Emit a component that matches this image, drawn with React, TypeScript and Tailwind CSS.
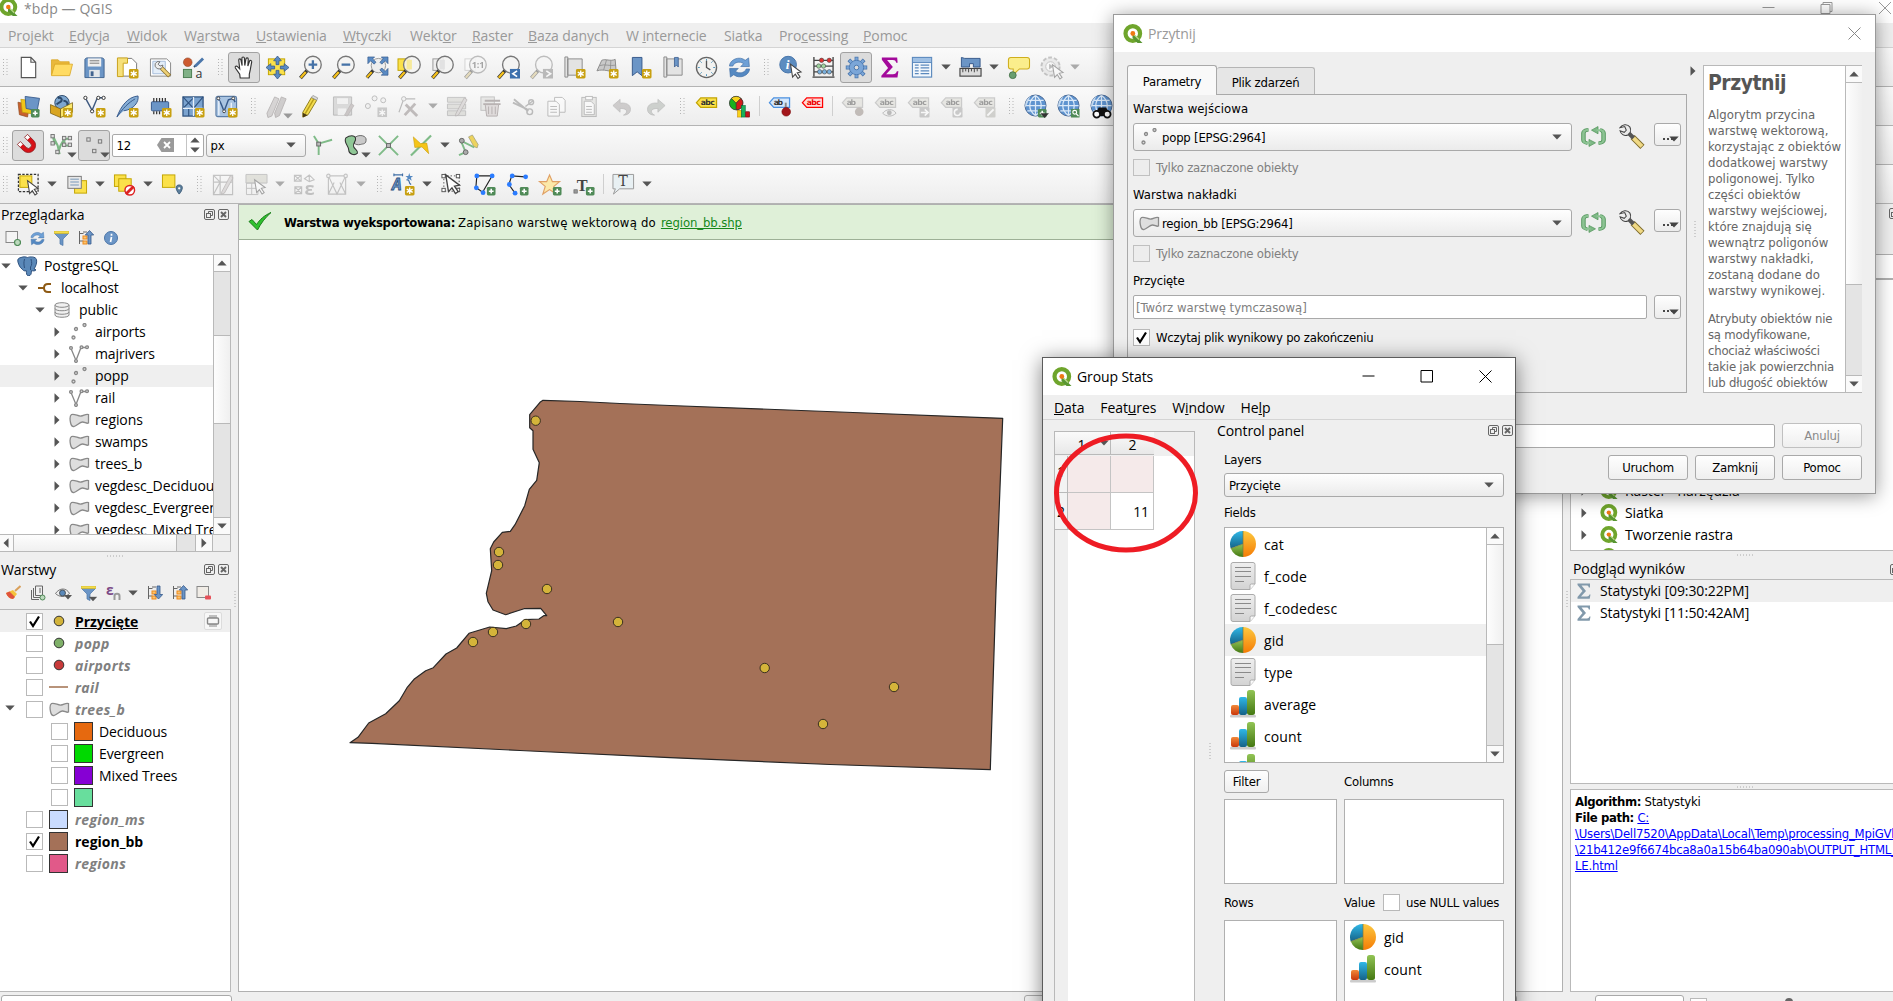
import type { ReactNode } from "react";

const SEG = "font-['Open_Sans','Noto_Sans',sans-serif] [font-stretch:normal] text-[14px] tracking-[-0.1px]";
const TAH = "font-['DejaVu_Sans_Condensed','DejaVu_Sans',sans-serif] [font-stretch:condensed] text-[13px] tracking-[-0.22px]";

/* ---------- icons ---------- */

const Star = () => (
  <g>
    <rect x="13.5" y="13.5" width="10" height="10" rx="1.5" fill="#c8a011" />
    <path d="M18.5 15v7M15.4 16.8l6.2 3.4M21.6 16.8l-6.2 3.4" stroke="#fff" strokeWidth="1.4" fill="none" />
  </g>
);
const Plus = () => (
  <g>
    <rect x="14.5" y="14.5" width="9" height="9" rx="1.5" fill="#4f8a57" />
    <path d="M19 16.5v5M16.5 19h5" stroke="#fff" strokeWidth="1.6" />
  </g>
);
const Lens = ({ children }: { children?: ReactNode }) => (
  <g>
    <path d="M9 14.5 1.500 23" stroke="#333" strokeWidth="3.800" />
    <path d="M7 16.800 1.800 22.600" stroke="#f6c21c" strokeWidth="2.400" />
    <circle cx="14.500" cy="9" r="8.700" fill="#f4f4f2" fillOpacity=".88" stroke="#777" strokeWidth="1.400" />
    {children}
  </g>
);
const Cursor = ({ x = 12, y = 9 }: { x?: number; y?: number }) => (
  <path
    transform={`translate(${x} ${y})`}
    d="M0 0 11 8.2 7 9 10 13.4 7.8 15 5 10.4 2.2 13.4Z"
    fill="#fff"
    stroke="#444"
    strokeWidth="1.1"
  />
);
const Tag = ({ fill, stroke, color = "#333", label = "abc" }: { fill: string; stroke: string; color?: string; label?: string }) => (
  <g>
    <path d="M1.500 8 6 3h16.500v10H6z" fill={fill} stroke={stroke} strokeWidth="1.3" />
    <text x="6" y="10.800" fontSize="8" fontWeight="bold" fontFamily="DejaVu Sans" fill={color} textLength={label === "abc" ? 14.5 : 9.5}>
      {label}
    </text>
  </g>
);
const Globe = () => (
  <g>
    <circle cx="12" cy="11" r="11" fill="#5e93cf" stroke="#4b6a94" strokeWidth="1" />
    <path d="M1.5 11h21M3.5 5.5h17M3.5 16.5h17M12 .5v21M12 .5C4 6 4 16 12 21.5M12 .5c8 5.500 8 15.500 0 21" stroke="#dbe9f8" strokeWidth="1.3" fill="none" />
    <path d="M7 .8C2 5 1 8 1.300 13c3-4 3-8 5.700-12.200z" fill="#c5daf0" />
  </g>
);
const Sheet = ({ c = "#555" }: { c?: string }) => <path d="M4.500 1.500h10l5 5v16h-15zM14.500 1.500v5h5" fill="#fff" stroke={c} strokeWidth="1.200" />;

const ICONS: Record<string, ReactNode> = {
  newfile: <Sheet />,
  open: (
    <g stroke="#d9a520" strokeWidth=".8">
      <path d="M1.500 19.500V4h7l2 2h9.500v13.500z" fill="#e9b83c" />
      <path d="M1.500 20.500 5 8.500h18.500l-3 12z" fill="#ffdb63" />
    </g>
  ),
  save: (
    <g>
      <path d="M2 3.500 3.500 2h17L22 3.500v19H2z" fill="#6b95c6" stroke="#42648f" strokeWidth="1" />
      <rect x="5" y="2.500" width="14" height="8.500" fill="#efefef" />
      <path d="M7 5h10M7 7.500h10" stroke="#777" strokeWidth="1" />
      <rect x="6.500" y="14.500" width="11" height="7.500" fill="#e4e7ea" />
      <rect x="8" y="16" width="3" height="5" fill="#42648f" />
    </g>
  ),
  newlayout: (
    <g>
      <path d="M2.500 2.500h14l5 5v13.500h-19z" fill="#fff" stroke="#777" />
      <path d="M1.500 21.500V2H12v5.500H7.500v14z" fill="#f6e07a" stroke="#c9a21a" />
      <Star />
    </g>
  ),
  layoutmgr: (
    <g>
      <path d="M1.500 3h17l4 4v14h-21z" fill="#fff" stroke="#888" />
      <path d="M4 5.500h13v13H4z" fill="#e4eef9" stroke="#a6bddb" />
      <path d="M13 12.500 21.500 21" stroke="#8a6f2a" strokeWidth="4.400" />
      <path d="M13 12.500 21 20.500" stroke="#edd077" strokeWidth="2.800" />
      <path d="M6.500 8a4 4 0 0 1 5-2l-2 2.500 2 2 3-1a4 4 0 0 1-6 3.500 4 4 0 0 1-2-5z" fill="#eee" stroke="#666" strokeWidth=".9" />
    </g>
  ),
  styles: (
    <g>
      <circle cx="6" cy="6.500" r="4.500" fill="#cd5b30" stroke="#8d4427" strokeWidth=".6" />
      <path d="M14 10.500 22 2.500" stroke="#4b77ab" strokeWidth="3" />
      <path d="M12.500 11.500 14 10" stroke="#2c4d78" strokeWidth="2" />
      <rect x="1.500" y="14" width="8.500" height="8.500" fill="#80b187" stroke="#4b7d52" />
      <text x="14" y="22.500" fontSize="13" fontFamily="Open Sans" fill="#333">a</text>
    </g>
  ),
  pan: (
    <path
      d="M7.500 23 7 19 2.500 12.500c-.8-1.600 1-2.600 2.200-1.400L7 13.500 6 4.500C5.900 2.700 8 2.500 8.300 4.200L9.500 10 9.300 2.300C9.300.6 11.700.6 11.900 2.200L12.300 10l1.200-7c.3-1.600 2.500-1.300 2.400.4L15.500 10.500l1.700-5c.6-1.500 2.500-.9 2.300.7L18 14.500 17 19v4z"
      fill="#fff"
      stroke="#333"
      strokeWidth="1.200"
    />
  ),
  panto: (
    <g>
      <rect x="2.500" y="3" width="17" height="16.500" fill="#fbe14a" stroke="#c2a400" />
      <path d="M12 0 16 5h-2.500v4h-3V5H8zM12 24l4-5h-2.500v-4h-3v4H8zM0 12l5-4v2.500h4v3H5V16zM24 12l-5-4v2.500h-4v3h4V16z" fill="#5a8bc4" stroke="#35588a" strokeWidth=".8" />
    </g>
  ),
  zoomin: <Lens><path d="M14.500 4.500v9M10 9h9" stroke="#4673a8" strokeWidth="2.400" /></Lens>,
  zoomout: <Lens><path d="M10 9h9" stroke="#4673a8" strokeWidth="2.400" /></Lens>,
  zoomfull: (
    <g>
      <path d="M9 14.500 2 22.500" stroke="#333" strokeWidth="3.600" />
      <path d="M7 16.800 2 22.300" stroke="#f6c21c" strokeWidth="2.200" />
      <circle cx="14" cy="10" r="7.500" fill="#eee" stroke="#999" />
      <path d="M3 1h7L8 3l3.500 3.500-2 2L6 5 3 8zM24 1h-7l2 2-3.500 3.500 2 2L21 5l3 3zM24 20h-7l2-2-3.500-3.500 2-2L21 16l3-3z" fill="#5a8bc4" stroke="#35588a" strokeWidth=".7" />
    </g>
  ),
  zoomsel: <g><rect x="0" y="3" width="12" height="12" fill="#fbe14a" stroke="#c2a400" /><Lens><path d="M9 4h5.500v10H9z" fill="#f7ea9b" /></Lens></g>,
  zoomlayer: <g><rect x="2" y="3" width="11" height="12" fill="#eee" stroke="#999" /><Lens><path d="M9 4h5.500v10H9z" fill="#e2e2e2" /></Lens></g>,
  zoom11: <g><rect x="1" y="3" width="11" height="12" fill="#fff" stroke="#aaa" /><Lens><text x="8" y="12.500" fontSize="9.500" fontWeight="bold" fontFamily="Open Sans" fill="#444">1:1</text></Lens></g>,
  zoomlast: <g><Lens /><rect x="13.500" y="13.500" width="10.500" height="10" fill="#3d70ad" /><path d="M21 15.500 16.500 18.500 21 21.500" stroke="#fff" strokeWidth="1.700" fill="none" /></g>,
  zoomnext: <g><Lens /><rect x="13.500" y="13.500" width="10.500" height="10" fill="#777" /><path d="M17 15.500 21.500 18.500 17 21.500" stroke="#fff" strokeWidth="1.700" fill="none" /></g>,
  newmap: <g><path d="M2 1h3v21H2zM5 3h15v17H5z" fill="#e3e3e3" stroke="#8b8b8b" /><Star /></g>,
  new3d: <g><path d="M6 4.500C10 2.500 15 6 20 3.500L21 16C15 17 8 13 1 15.500z" fill="#c9c9c9" stroke="#8b8b8b" /><path d="M4 10c5-2 11 1 16.500-.5M11 4 8 14.500M15.500 4.500 15 15.500" stroke="#8b8b8b" fill="none" strokeWidth=".8" /><Star /></g>,
  newbm: <g><path d="M3.500 1.500h10v19l-5-4-5 4z" fill="#6b95c6" stroke="#35588a" /><Star /></g>,
  showbm: <g><path d="M2 1h3v21H2zM5 3h16v17H5z" fill="#e3e3e3" stroke="#8b8b8b" /><path d="M13 1.500h4v10l-2-2-2 2z" fill="#6b95c6" stroke="#35588a" strokeWidth=".8" /></g>,
  clock: (
    <g>
      <circle cx="12" cy="12" r="10.500" fill="#f2f2f0" stroke="#666" strokeWidth="1.400" />
      <path d="M12 3v2M12 19v2M3 12h2M19 12h2M5.600 5.600l1.400 1.400M17 17l1.400 1.400M5.600 18.400 7 17M17 7l1.400-1.400" stroke="#4a90b8" />
      <path d="M12 5v7l4 2.500" stroke="#555" strokeWidth="1.400" fill="none" />
    </g>
  ),
  refresh: (
    <g stroke="#3f6ea5" strokeWidth=".7">
      <path d="M1.500 10.500C2 3.500 12-.5 18 4.500L21.500 2l.8 9h-9l3-3C12 5 6.500 6.500 5 10.500z" fill="#6ea0d6" />
      <path d="M22.500 13.500C22 20.500 12 24.500 6 19.500L2.500 22l-.8-9h9l-3 3C12 19 17.500 17.500 19 13.500z" fill="#5589c2" />
    </g>
  ),
  identify: <g><circle cx="9.500" cy="9" r="8.700" fill="#5c8cc0" stroke="#4573a8" /><text x="7" y="14" fontSize="14" fontStyle="italic" fontWeight="bold" fontFamily="Liberation Serif" fill="#fff">i</text><Cursor x={12} y={8.500} /></g>,
  abacus: (
    <g>
      <path d="M2 1v20M22 1v20M2 4.500h20M2 10.500h20M2 16.500h20M0.500 22h23" stroke="#444" strokeWidth="1.400" />
      <g stroke="#444" strokeWidth=".6">
        <circle cx="10" cy="4.500" r="2.300" fill="#d33" /><circle cx="18" cy="4.500" r="2.300" fill="#d33" />
        <circle cx="7" cy="10.500" r="2.300" fill="#9fd49f" /><circle cx="12" cy="10.500" r="2.300" fill="#9fd49f" />
        <circle cx="8" cy="16.500" r="2.300" fill="#7ab0dd" /><circle cx="13" cy="16.500" r="2.300" fill="#7ab0dd" /><circle cx="18" cy="16.500" r="2.300" fill="#7ab0dd" />
      </g>
    </g>
  ),
  gear: (
    <g>
      <path d="M12 .8v22.400M.8 12h22.400M4 4l16 16M20 4 4 20" stroke="#4a77ae" strokeWidth="4" />
      <path d="M12 1.600v20.800M1.600 12h20.800M4.600 4.600l14.800 14.800M19.400 4.600 4.600 19.400" stroke="#7ba6d8" strokeWidth="2.400" />
      <circle cx="12" cy="12" r="7.500" fill="#7ba6d8" stroke="#4a77ae" strokeWidth=".9" />
      <circle cx="12" cy="12" r="2.400" fill="#dcdcdc" stroke="#4a77ae" />
    </g>
  ),
  sigma: <path d="M4 1.500h16l.5 5.500H19c-.5-2-1.500-2.700-3.500-2.700h-6L15.500 11.500 8.500 19H15.500c2.500 0 3.500-.8 4.200-3h1.600l-1 6.500H3.500v-2L10.500 12.500 4 4z" fill="#a30a9b" />,
  table: (
    <g>
      <rect x="1.500" y="1.500" width="20" height="20.500" fill="#f2f7fc" stroke="#5b89bd" strokeWidth="1.200" />
      <rect x="2" y="2" width="19" height="4.500" fill="#9fc0e4" />
      <path d="M2 6.800h19" stroke="#5b89bd" />
      <path d="M4 9.500h4M10 9.500h9M4 12.500h4M10 12.500h9M4 15.500h4M10 15.500h9M4 18.500h4M10 18.500h9" stroke="#5b89bd" strokeWidth="1.300" />
    </g>
  ),
  measure: (
    <g>
      <path d="M2.500 1.500 6 2.500h16v9h-7V8h-4v3.500H2.500z" fill="#6b95c6" stroke="#35588a" />
      <rect x="1" y="13" width="22" height="8" fill="#dcdcdc" stroke="#444" strokeWidth="1.200" />
      <path d="M4 13v4M7 13v3M10 13v4M13 13v3M16 13v4M19 13v3" stroke="#444" />
    </g>
  ),
  tip: (
    <g>
      <path d="M4 1.500h17c1.500 0 2.500 1 2.500 2.500v7c0 1.500-1 2.500-2.500 2.500h-8L6.500 19.500V13.500H4c-1.500 0-2.500-1-2.500-2.500V4c0-1.500 1-2.500 2.500-2.500z" fill="#fbee8c" stroke="#cfae1c" strokeWidth="1.100" />
      <circle cx="6" cy="20" r="3.600" fill="#6a9e6f" stroke="#3f6b43" strokeWidth=".8" />
    </g>
  ),
  action: <g><circle cx="11" cy="11" r="9.500" fill="#ddd" stroke="#888" strokeDasharray="4 2" strokeWidth="2" /><circle cx="11" cy="11" r="5" fill="#fff" stroke="#888" /><path d="M9.500 8l4.500 3-4.500 3z" fill="#777" /><Cursor x={13} y={9} /></g>,
  dsm: (
    <g>
      <path d="M1 7.500 13 10 11 23 2.500 20.500z" fill="#c9602c" stroke="#8e4a20" strokeWidth=".7" />
      <path d="M4 4.500 16 6l-1 13.500L5.500 18z" fill="#f0c419" stroke="#b8940f" strokeWidth=".7" />
      <path d="M8.500 1.500 23.500 3.500 21 16.500 9.500 14z" fill="#6b95c6" stroke="#35588a" strokeWidth=".9" />
      <Plus />
    </g>
  ),
  geopkg: (
    <g>
      <circle cx="12.500" cy="8" r="7.500" fill="#7da6cf" stroke="#2d4a6c" />
      <path d="M8 3c3-1 5 1 4 3s-4 2-5 4M14 6c3 0 5 2 4 5" stroke="#2d4a6c" strokeWidth="2.200" fill="none" />
      <path d="M0.500 10 11 14.500V23.500L.5 19z" fill="#d9a520" stroke="#7b5f10" strokeWidth=".8" />
      <path d="M11 14.500 23.500 8v10L11 23.500z" fill="#fbe96f" stroke="#7b5f10" strokeWidth=".8" />
      <Star />
    </g>
  ),
  newshp: (
    <g>
      <path d="M3 4 9.500 16 14.500 4C16 2.500 18 3 21 3" stroke="#3f5a80" strokeWidth="1.500" fill="none" />
      <g fill="#fff" stroke="#333"><circle cx="2.500" cy="3" r="1.700" /><circle cx="9.500" cy="17" r="1.700" /><circle cx="16" cy="3" r="1.700" /><circle cx="21.500" cy="3" r="1.700" /></g>
      <Star />
    </g>
  ),
  feather: <g><path d="M1 23C5 12 12 2 23 1c1 6-4 14-15 15.500" fill="#86aed6" stroke="#35588a" /><path d="M1 23C7 14 13 8 20 4" stroke="#35588a" fill="none" /><Star /></g>,
  chip: <g><rect x="2.500" y="7" width="18" height="9.500" rx="1" fill="#6b95c6" stroke="#35588a" /><path d="M5 3v4M8 3v4M11 3v4M14 3v4M17 3v4M5 17v3M8 17v3M11 17v3" stroke="#333" strokeWidth="1.300" /><Star /></g>,
  mesh: <g><rect x="1" y="2" width="21" height="20" fill="#7ba3cf" stroke="#2f527f" strokeWidth="1.300" /><path d="M1 2l11 12L22 2M1 14 12 3M7 14v8" stroke="#2f527f" strokeWidth="1.200" fill="none" /><path d="M12 2v20M1 14h21" stroke="#e8f0f9" strokeWidth="1.300" fill="none" /><Star /></g>,
  virtual: <g><rect x="1" y="1.500" width="21.500" height="21" rx="2" fill="#a9c4e2" stroke="#5b7da6" strokeWidth="1.200" /><path d="M3 4c3 2 4 8 6.500 13L14 5l5-1.500 2 4" stroke="#35588a" strokeWidth="1.500" fill="none" /><path d="M4 21V6M17 21V8" stroke="#e9f1fa" strokeWidth="1.500" /><g fill="#fff" stroke="#444"><circle cx="3.500" cy="3.500" r="1.500" /><circle cx="9.500" cy="17" r="1.500" /><circle cx="19" cy="3.500" r="1.500" /></g><Star /></g>,
  pencils: <g stroke="#6b5555" strokeWidth=".8"><path d="M1 19 9 2l4.500 2L6 22l-4 1.500z" fill="#b9acac" /><path d="M9 19 16 2l5 2-7 17.500-4 2z" fill="#a99b9b" /></g>,
  pencil: <g><path d="M4 18 13 2.500 18.500 5.500 9.500 20.500 4 23z" fill="#f4dc4e" stroke="#8b7a1c" /><path d="M6.500 19.500 15.500 4" stroke="#b99f1a" strokeWidth="1.500" /><path d="M4 18.500 9 21 4 23.500z" fill="#4a3a12" /><path d="M13 2.500 14.500.5l5 2.500-1 2.500z" fill="#ddd" stroke="#888" strokeWidth=".7" /></g>,
  savedit: <g><path d="M1.500 2h19v19h-19z" fill="#bbb" stroke="#777" /><rect x="5" y="3" width="12" height="7" fill="#eee" stroke="#999" strokeWidth=".5" /><rect x="6" y="14" width="9" height="7" fill="#eee" /><path d="M13 21 20 9l3 2-7 11z" fill="#a89090" stroke="#776060" strokeWidth=".6" /></g>,
  addpts: <g><g fill="#eee" stroke="#777"><circle cx="10" cy="3.500" r="2.600" /><circle cx="19" cy="5.500" r="2.600" /><circle cx="3" cy="11.500" r="2.600" /></g><rect x="13" y="13" width="10" height="10" fill="#999" /><path d="M18 15v7M15 16.700l6 3.500M21 16.700l-6 3.500" stroke="#fff" strokeWidth="1.300" /></g>,
  vertex: <g><path d="M1 18 6 4h12" stroke="#777" strokeWidth="1.200" fill="none" /><circle cx="6" cy="4" r="2.300" fill="#eee" stroke="#777" /><path d="M8 10 20 22M18 9 7 21" stroke="#8d7676" strokeWidth="3" /></g>,
  tabedit: <g><path d="M1.500 2.500h19v5h-19zM1.500 9.500h19v5h-19zM1.500 16.500h19v5h-19z" fill="#c9c9b9" stroke="#888" /><path d="M10 20 19 3l3 2-9 16-3 1z" fill="#c9bcbc" stroke="#776060" strokeWidth=".7" /></g>,
  trash: <g stroke="#7d5c5c"><rect x="2" y="2" width="14" height="14" fill="#d8d8cc" stroke="#888" /><path d="M6 6h16M4.500 9.500h18" strokeWidth="2" /><path d="M6.500 10h14l-1.500 12h-11z" fill="#d5bfbf" /><path d="M10 12v8M13.500 12v8M17 12v8" /></g>,
  cut: <g stroke="#777" fill="none"><path d="M1 8 16 15M2 4.500 17 17" strokeWidth="2" /><path d="M14 12 22 6" strokeWidth="1.600" /><circle cx="18.500" cy="17.500" r="3" strokeWidth="1.500" /><circle cx="20" cy="7.500" r="2.500" strokeWidth="1.500" /></g>,
  copy: <g fill="#fff" stroke="#777"><path d="M10 2.500h8l3 3V18H10z" /><path d="M3 6.500h8.500l3.500 3.500v12H3zM5.500 12h7M5.500 15h7M5.500 18h7" /></g>,
  paste: <g fill="#fff" stroke="#777"><rect x="4" y="2.500" width="15" height="20" fill="#d8d8cc" /><rect x="8" y="1.500" width="7" height="3.500" /><path d="M6.500 6.500h7l3.500 3.500v10.500h-10.500zM8.500 12h6M8.500 15h6M8.500 18h6" /></g>,
  undo: <path d="M2 11 9.500 4.500v4C18 7.500 21.500 12 20 17c-1 3-4 4-7 4 4-2 6-7-3.500-7v4z" fill="#a89a9a" stroke="#777" strokeWidth=".7" />,
  redo: <path d="M22 11 14.500 4.500v4C6 7.500 2.500 12 4 17c1 3 4 4 7 4-4-2-6-7 3.500-7v4z" fill="#9aa89a" stroke="#777" strokeWidth=".7" />,
  label: <Tag fill="#fbe14a" stroke="#c2a400" />,
  diagram: (
    <g>
      <circle cx="8.500" cy="8.500" r="7" fill="#19b21e" stroke="#333" strokeWidth=".8" />
      <path d="M8.500 8.500 3.500 3.500a7 7 0 0 1 10 0z" fill="#f7d31a" stroke="#333" strokeWidth=".7" /><path d="M8.500 8.500 13.500 3.500a7 7 0 0 1-5 12z" fill="#d31a1a" stroke="#333" strokeWidth=".7" />
      <rect x="10" y="16" width="4" height="7" fill="#f7d31a" stroke="#c80" strokeWidth=".6" /><rect x="14" y="11" width="4" height="12" fill="#19b25a" stroke="#063" strokeWidth=".6" /><rect x="18.500" y="17.500" width="4" height="5.500" fill="#c8141a" stroke="#600" strokeWidth=".6" />
    </g>
  ),
  pin: <g><Tag fill="#d5e7fb" stroke="#4a90e0" label="ab" /><path d="M18.500 8v8" stroke="#888" strokeWidth="2" /><circle cx="19" cy="17.500" r="4.500" fill="#a3161b" stroke="#700" strokeWidth=".6" /></g>,
  abcred: <Tag fill="#ffd9d6" stroke="#f00" color="#e00" />,
  labpin: <g><Tag fill="#d8d6c0" stroke="#999" label="ab" /><circle cx="19" cy="17.500" r="4.500" fill="#976" /></g>,
  labeye: <g><Tag fill="#d8d6c0" stroke="#999" /><path d="M9 19c4-5 11-5 14 0-4 4-10 4-14 0z" fill="#eee" stroke="#777" /><circle cx="16" cy="18.500" r="2.500" fill="#777" /></g>,
  labmove: <g><Tag fill="#d8d6c0" stroke="#999" /><rect x="13" y="13" width="10.500" height="10.500" rx="1" fill="#999" /><path d="M14.500 18.200h7M18.500 15l3.500 3.200-3.500 3.300" stroke="#fff" strokeWidth="1.700" fill="none" /></g>,
  labrot: <g><Tag fill="#d8d6c0" stroke="#999" /><rect x="13" y="13" width="10.500" height="10.500" rx="1" fill="#999" /><circle cx="18.200" cy="18.200" r="3.200" stroke="#fff" strokeWidth="1.600" fill="none" strokeDasharray="15 5" /></g>,
  labedit: <g><Tag fill="#d8d6c0" stroke="#999" /><rect x="13" y="13" width="10.500" height="10.500" rx="1" fill="#aa9" /><path d="M15 21.500 21.500 15" stroke="#fff" strokeWidth="2" /></g>,
  globeadd: <g><Globe /><Plus /><path d="M17 19h9l-4.500 5z" fill="#333" /></g>,
  globesearch: <g><Globe /><rect x="14.500" y="14.500" width="9" height="9" fill="#4f8a57" /><circle cx="18.500" cy="18" r="2" stroke="#fff" fill="none" strokeWidth="1.200" /><path d="M20 19.500l2.500 2.500" stroke="#fff" strokeWidth="1.300" /></g>,
  globebino: <g><Globe /><path d="M5 22 9 13h8l4 9z" fill="#111" /><circle cx="7" cy="20" r="3.500" fill="#fff" stroke="#111" strokeWidth="1.800" /><circle cx="18" cy="20" r="3.500" fill="#fff" stroke="#111" strokeWidth="1.800" /></g>,
  magnet: (
    <g transform="translate(12.500 12.500) rotate(-45) scale(.88) translate(-12 -13)">
      <path d="M6 6v6a6 6 0 0 0 12 0V6" stroke="#d81118" strokeWidth="5" fill="none" />
      <path d="M6 2v4.500M18 2v4.500" stroke="#fff" strokeWidth="4.600" />
      <path d="M3.500 2v10a8.500 8.500 0 0 0 17 0V2h-5v10a3.500 3.500 0 0 1-7 0V2z" stroke="#8b1a1c" strokeWidth=".9" fill="none" />
    </g>
  ),
  snapv: <g><path d="M3 2 5 11M3 2l5 10 2 9M8 21l3-9 4-7h6M15 5v7h6" stroke="#7db885" strokeWidth="2.200" fill="none" /><g fill="#ddd" stroke="#777"><rect x="1" y=".5" width="3.500" height="3.500" /><rect x="1" y="8" width="3.500" height="3.500" /><rect x="6" y="17" width="3.500" height="3.500" /><rect x="13" y="2.500" width="3.500" height="3.500" /><rect x="19" y="2.500" width="3.500" height="3.500" /><rect x="13" y="9.500" width="3.500" height="3.500" /><rect x="19" y="9.500" width="3.500" height="3.500" /></g></g>,
  snappts: <g fill="#ddd" stroke="#777"><rect x="4" y="4" width="3.500" height="3.500" /><rect x="16" y="6" width="3.500" height="3.500" /><rect x="10" y="16" width="3.500" height="3.500" /></g>,
  topo: <g><path d="M3 2l5 8M8 10v12M8 10l14-4" stroke="#7fbb88" strokeWidth="2" /><rect x="6" y="8.500" width="4" height="4" fill="#bbb" stroke="#666" /></g>,
  overlap: <g><path d="M10 5c4-5 12-4 13 0 .5 6-3 5-6 6-5 1-9-2-7-6z" fill="#c9c9c9" stroke="#666" /><path d="M2 4c4-3 9-3 10 0 1 4-3 5-2 9 1 3 5 4 4 7-3 3-9 1-9-3 0-5-6-8-3-13z" fill="#8fc796" stroke="#333" strokeWidth="1.100" /></g>,
  cross: <g><path d="M2 2l20 20M22 2 2 22" stroke="#7fbb88" strokeWidth="2" /><rect x="10" y="10" width="4" height="4" fill="#bbb" stroke="#666" /></g>,
  trace: <g><path d="M1 22.500 22 1.500" stroke="#7fbb88" strokeWidth="2.200" /><path d="M3.500 3 11 10l6.500-.5L19.500 20.500 12.500 13.500 5 14z" fill="#f5c518" stroke="#c79a0c" strokeWidth=".6" /></g>,
  tracedit: <g><path d="M1 22l7-3L3 7l14 7" stroke="#7fbb88" strokeWidth="2" fill="none" /><circle cx="4" cy="7" r="2.500" fill="#aaa" stroke="#666" /><circle cx="8" cy="19" r="2.500" fill="#aaa" stroke="#666" /><path d="M11 3l4-2 6 10-1 3.500-3.500-1.500z" fill="#edd35e" stroke="#997" strokeWidth=".7" /></g>,
  select: <g><rect x="1.500" y="1.500" width="20.500" height="18" fill="none" stroke="#333" strokeWidth="1.300" strokeDasharray="2.500 1.500" /><rect x="3" y="3" width="12.500" height="12" fill="#fbe14a" stroke="#c2a400" /><Cursor x={11} y={8} /></g>,
  selform: <g><rect x="10" y="8" width="12.500" height="13" fill="#fbe14a" stroke="#c2a400" /><rect x="3" y="3.500" width="14" height="12.500" fill="#e8e8e8" stroke="#777" /><path d="M5.500 6.500h9M5.500 9.500h9M5.500 12.500h9" stroke="#9db3c9" strokeWidth="1.600" /></g>,
  desel: <g><rect x="1.500" y="2" width="12" height="12" fill="#fbe14a" stroke="#c2a400" /><rect x="6" y="6" width="13" height="13" fill="#fbe14a" stroke="#c2a400" /><circle cx="17.500" cy="18" r="5" fill="#fff" stroke="#d22" strokeWidth="1.500" /><path d="M13.500 22 21.500 14" stroke="#d22" strokeWidth="3" /></g>,
  selloc: <g><rect x="1.500" y="2" width="13" height="13" fill="#fbe14a" stroke="#c2a400" /><path d="M19 12.500c4.500 0 4 5 0 9.500-4-4.500-4.500-9.500 0-9.500z" fill="#5c7f9c" stroke="#395a77" /><circle cx="19" cy="16" r="1.200" fill="#fff" /></g>,
  dig1: <g><path d="M1.500 2.500h20v20h-20zM1.500 9.500h20M8.500 2.500v20M1.500 2.500l7 7M8.500 9.500l-7 13" stroke="#888" fill="none" strokeWidth="1.200" /><path d="M10 20 19 3l3 2-9 16-3 1z" fill="#c9bcbc" stroke="#776060" strokeWidth=".7" /></g>,
  dig2: <g><path d="M1 1.500h22v9H1z" fill="#c9c9ab" stroke="#888" /><path d="M1.500 10.500h12v12h-12zM1.500 16h12M7 10.500v12" stroke="#888" fill="none" /><Cursor x={10} y={7} /></g>,
  dig3: <g stroke="#888" fill="none" strokeWidth="1.200"><path d="M1.500 2.500h7v6h-7zM1.500 2.500l7 6M8.500 2.500l-7 6M2 14.500h7v7H2zM2 14.500l7 7M9 14.500l-7 7M12 6l5-4 5 5-5 2zM17 2v7" /><text x="12" y="22.500" fontSize="19" fill="#888" stroke="none" fontFamily="Open Sans" fontWeight="bold">ε</text></g>,
  dig4: <g stroke="#888" fill="none" strokeWidth="1.200"><path d="M2.500 3h18v19h-18zM2.500 3l9 19 9-19M2.500 22l6-12M20.500 22l-6-12" /><g fill="#eee"><circle cx="2.500" cy="3" r="1.800" /><circle cx="20.500" cy="3" r="1.800" /></g></g>,
  annlayer: <g><path d="M2 2h9M2 .5v3M11 .5v3M20 12c-4-2 0-5-5-5" stroke="#3f6ea5" fill="none" strokeWidth="1.200" /><text x="0" y="18" fontSize="16" fontStyle="italic" fontWeight="bold" fontFamily="Open Sans" fill="#6b95c6" stroke="#2f527f" strokeWidth=".8">A</text><path d="M18 0l1 3h3l-2.300 2 .9 3L18 6.300 15.400 8l.9-3L14 3h3z" fill="#5589c2" /><Star /></g>,
  selann: <g><rect x="4" y="3" width="16" height="16" fill="none" stroke="#555" strokeDasharray="1.500 2" /><g fill="#fff" stroke="#555"><rect x="2" y="1.500" width="3.500" height="3.500" /><rect x="17" y="1.500" width="3.500" height="3.500" /><rect x="2" y="16" width="3.500" height="3.500" /><rect x="17" y="16" width="3.500" height="3.500" /></g><g transform="translate(6 2) scale(1.300)"><Cursor x={0} y={0} /></g></g>,
  annpoly: <g><path d="M4 3h16L10 20 3 15z" fill="none" stroke="#222" strokeWidth="1.200" /><g fill="#2b7cff"><circle cx="4" cy="3" r="2.500" /><circle cx="20" cy="3" r="2.500" /><circle cx="3.500" cy="15.500" r="2.500" /><circle cx="10.500" cy="20.500" r="2.500" /></g><Plus /></g>,
  annline: <g><path d="M20 4 6 3 3 12l6 8.500" fill="none" stroke="#222" strokeWidth="1.200" /><g fill="#2b7cff"><circle cx="20.500" cy="4" r="2.500" /><circle cx="6.500" cy="3" r="2.500" /><circle cx="3.500" cy="12" r="2.500" /><circle cx="9.500" cy="21" r="2.500" /></g><Plus /></g>,
  annstar: <g><path d="M11 2l3 7h7.500l-6 5 2.500 8-7-4.700L4 22l2.500-8-6-5H8z" fill="#fce9a9" stroke="#e0a065" strokeWidth="1.200" /><Plus /></g>,
  anntext: <g><rect x="2" y="17.500" width="3.500" height="3.500" fill="#999" stroke="#666" strokeWidth=".7" /><text x="5" y="19" fontSize="17" fontWeight="bold" fontFamily="Liberation Serif" fill="#444">T</text><Plus /></g>,
  textann: <g><path d="M1 1.500h21.500v15H8L1.500 22l2-5.500H1z" fill="#e8f0f3" stroke="#999" /><text x="6.500" y="13.500" fontSize="15" fontFamily="DejaVu Serif" fill="#444">T</text></g>,
  loop: <g fill="none" transform="translate(12 12) scale(1.050 .8) translate(-12 -12.500)"><path d="M6 21H5.500A4 4 0 0 1 2 17V8a4 4 0 0 1 3.500-4H7M18.500 4A4 4 0 0 1 22 8v9a4 4 0 0 1-4 4h-1" stroke="#4f9458" strokeWidth="4.400" /><path d="M6 21H5.500A4 4 0 0 1 2 17V8a4 4 0 0 1 3.500-4H7M18.500 4A4 4 0 0 1 22 8v9a4 4 0 0 1-4 4h-1" stroke="#8cc393" strokeWidth="2.600" /><path d="M16.500 9V-.5l-6.500 4.700zM7.500 25.500V16.300l6.500 4.500z" fill="#7db885" stroke="#4f9458" strokeWidth=".8" /><path d="M15 4.200h5M9 20.800H5" stroke="#8cc393" strokeWidth="2.600" /></g>,
  wrench: <g><path d="M13 12.500l9.500 9.500" stroke="#7d6a2b" strokeWidth="5.600" /><path d="M13.300 12.800l8.700 8.700" stroke="#f0d985" strokeWidth="3.900" /><path d="M9 8.500l5 5" stroke="#555" strokeWidth="4" /><path d="M1 3.500C3 .5 8-.5 10.500 3c1 1.700.8 3.500.3 5L8.500 10.500C5 12 1.500 9.500 1 6.500l4 1.500 2-2-1.500-3.500z" fill="#e9e9e9" stroke="#444" /></g>,
};

const Icon = ({ name, size = 24, className = "" }: { name: string; size?: number; className?: string }) => (
  <svg viewBox="0 0 24 24" width={size} height={size} className={`shrink-0 overflow-visible ${className}`}>
    {ICONS[name]}
  </svg>
);

const QLogo = ({ size = 20 }: { size?: number }) => (
  <svg viewBox="0 0 20 20" width={size} height={size} className="shrink-0">
    <circle cx="9.800" cy="9.500" r="7.300" fill="#fff" stroke="#6fa52c" strokeWidth="4.200" />
    <path d="M9.500 9 19.500 19h-5L9.500 14z" fill="#589632" />
    <path d="M10 9.500l6 6" stroke="#b8d98a" strokeWidth="1.200" />
    <circle cx="9.800" cy="9.500" r="2.400" fill="#ee7913" />
  </svg>
);

const Down = ({ c = "#555" }: { c?: string }) => (
  <svg width="10" height="6" viewBox="0 0 10 6" className="shrink-0"><path d="M.3.500h9.400L5 5.500z" fill={c} /></svg>
);
const Up = () => <svg width="10" height="6" viewBox="0 0 10 6"><path d="M.3 5.500h9.400L5 .5z" fill="#555" /></svg>;
const Right = ({ c = "#555" }: { c?: string }) => <svg width="6" height="10" viewBox="0 0 6 10" className="shrink-0"><path d="M.5.300v9.400L5.500 5z" fill={c} /></svg>;
const Left = () => <svg width="6" height="10" viewBox="0 0 6 10"><path d="M5.500.300v9.400L.5 5z" fill="#555" /></svg>;

const PolyIcon = () => (
  <svg width="21" height="15" viewBox="0 0 21 15" className="shrink-0">
    <path d="M2.500 1.500C6 .5 9 3.500 12 3s5-2.500 7.500-1.500v8.500c-2 1-3.500-1-6-1S8 12.500 5 13.500c-2 .3-3-1.500-3.500-4S1 2.500 2.500 1.500z" fill="#dedede" stroke="#8a8a8a" strokeWidth="1.300" />
  </svg>
);
const PointsIcon = () => (
  <svg width="20" height="18" viewBox="0 0 20 18" className="shrink-0" fill="#ddd" stroke="#888" strokeWidth="1.300">
    <circle cx="4.500" cy="14.500" r="1.500" /><circle cx="7" cy="6" r="1.500" /><circle cx="15.500" cy="2" r="1.500" />
  </svg>
);
const LineIcon = () => (
  <svg width="20" height="18" viewBox="0 0 20 18" className="shrink-0" fill="#ddd" stroke="#888" strokeWidth="1.300">
    <path d="M2 3.500 7 15.500 12 2.500h6" fill="none" /><circle cx="2" cy="3" r="1.400" /><circle cx="7" cy="16" r="1.400" /><circle cx="12.500" cy="2.200" r="1.400" /><circle cx="18" cy="2.200" r="1.400" />
  </svg>
);

/* ---------- toolbars ---------- */

const Grip = () => (
  <div className="flex w-[18px] shrink-0 justify-center pl-[4px]">
    <svg width="5" height="17" viewBox="0 0 5 17"><path d="M.5 0v17M4 0v17" stroke="#b5b5b5" strokeDasharray="1 2" /></svg>
  </div>
);
const FirstGrip = () => (
  <div className="flex w-[11.5px] shrink-0 pl-[3px]">
    <svg width="5" height="17" viewBox="0 0 5 17"><path d="M.5 0v17M4 0v17" stroke="#b5b5b5" strokeDasharray="1 2" /></svg>
  </div>
);

/* Item prefixes: "-" disabled, "*" pressed. "|" grip, "/" separator, "v" arrow, "-v" dim arrow, "+" suffix overlays an arrow. */
const Item = ({ id }: { id: string }) => {
  if (id === "|") return <Grip />;
  if (id === "/") return <div className="mx-[3px] h-[20px] w-px shrink-0 bg-[#cfcfcf]" />;
  if (id === "v" || id === "-v")
    return <div className="flex w-[15px] shrink-0 justify-center"><Down c={id === "v" ? "#555" : "#aaa"} /></div>;
  const dim = id[0] === "-";
  const pressed = id[0] === "*";
  const menu = id.endsWith("+");
  const name = id.replace(/[-*+]/g, "");
  return (
    <div className="relative flex w-[33px] shrink-0 justify-center">
      <div className={`flex h-[31px] w-[32px] items-center justify-center rounded-[3px] ${pressed ? "border border-[#a2a2a2] bg-[#dcdcdc]" : ""}`}>
        <Icon name={name} size={23} className={dim ? "opacity-45 grayscale-[60%]" : ""} />
      </div>
      {menu && <div className="absolute right-[1px] bottom-[3px]"><Down c={dim ? "#999" : "#555"} /></div>}
    </div>
  );
};

const ToolRow = ({ items, children }: { items: string[]; children?: ReactNode }) => (
  <div className="flex h-[39px] shrink-0 items-center border-b border-[#b4b4b4] bg-linear-to-b from-[#fafafa] to-[#ededed]">
    <FirstGrip />
    {items.map((id, i) => <Item key={i} id={id} />)}
    {children}
  </div>
);

const ROW1 = ["newfile", "open", "save", "newlayout", "layoutmgr", "styles", "|", "*pan", "panto", "zoomin", "zoomout", "zoomfull", "zoomsel", "zoomlayer", "-zoom11", "zoomlast", "-zoomnext", "newmap", "new3d", "newbm", "showbm", "clock", "refresh", "|", "identify", "abacus", "*gear", "sigma", "table", "v", "measure", "v", "tip", "-action", "-v"];
const ROW2 = ["dsm", "geopkg", "newshp", "feather", "chip", "mesh", "virtual", "|", "-pencils+", "pencil", "-savedit", "-addpts", "-vertex", "-v", "-tabedit", "-trash", "-cut", "-copy", "-paste", "-undo", "-redo", "|", "label", "diagram", "/", "pin", "abcred", "/", "-labpin", "-labeye", "-labmove", "-labrot", "-labedit", "|", "globeadd", "globesearch", "globebino"];
const ROW4 = ["select", "v", "selform", "v", "desel", "v", "selloc", "|", "-dig1", "-dig2", "-v", "-dig3", "-dig4", "-v", "|", "annlayer", "v", "selann", "annpoly", "annline", "annstar", "anntext", "/", "textann", "v"];

const MENU: [string, string, string, string][] = [
  ["Pro", "j", "ekt", "w-[61px]"], ["", "E", "dycja", "w-[58px]"], ["", "W", "idok", "w-[57px]"], ["W", "a", "rstwa", "w-[72px]"],
  ["", "U", "stawienia", "w-[87px]"], ["", "W", "tyczki", "w-[67px]"], ["Wekt", "o", "r", "w-[62px]"], ["", "R", "aster", "w-[56px]"],
  ["", "B", "aza danych", "w-[98px]"], ["W ", "i", "nternecie", "w-[98px]"], ["Siatka", "", "", "w-[55px]"], ["Pro", "c", "essing", "w-[84px]"], ["", "P", "omoc", "w-[60px]"],
];

/* ---------- small widgets ---------- */

const Check = ({ on = false, dim = false }: { on?: boolean; dim?: boolean }) => (
  <span className={`flex size-[17px] shrink-0 items-center justify-center border ${dim ? "border-[#c0c0c0] bg-[#ededed]" : "border-[#b9b9b9] bg-white"}`}>
    {on && <svg width="13" height="13" viewBox="0 0 13 13"><path d="M2 6.500 5 11 11 1.500" stroke="#000" strokeWidth="2.200" fill="none" /></svg>}
  </span>
);
const DockButtons = () => (
  <div className="flex shrink-0 gap-[3px]">
    <svg width="11" height="11" viewBox="0 0 11 11" fill="none" stroke="#666"><rect x=".5" y=".5" width="10" height="10" rx="1.500" /><rect x="2.500" y="4.500" width="4" height="4" /><path d="M4.500 4.500v-2h4v4h-2" /></svg>
    <svg width="11" height="11" viewBox="0 0 11 11" fill="none" stroke="#666"><rect x=".5" y=".5" width="10" height="10" rx="1.500" /><path d="M3 3l5 5M8 3 3 8" strokeWidth="1.900" /></svg>
  </div>
);
const HDots = () => <svg width="17" height="2" viewBox="0 0 17 2"><path d="M0 1h17" stroke="#aaa" strokeDasharray="1 2" /></svg>;
const VDots = () => <svg width="2" height="17" viewBox="0 0 2 17"><path d="M1 0v17" stroke="#aaa" strokeDasharray="1 2" /></svg>;

const VScroll = ({ before, handle }: { before: string; handle: string }) => (
  <div className="flex w-[17px] shrink-0 flex-col border-l border-[#b9b9b9] bg-[#e4e4e4]">
    <div className="flex h-[17px] shrink-0 items-center justify-center border-b border-[#b9b9b9] bg-[#fafafa]"><Up /></div>
    <div className={before} />
    <div className={`shrink-0 border-b border-[#b9b9b9] bg-linear-to-r from-[#fdfdfd] to-[#f0f0f0] ${handle}`} />
    <div className="flex-1" />
    <div className="flex h-[17px] shrink-0 items-center justify-center border-t border-[#b9b9b9] bg-[#fafafa]"><Down /></div>
  </div>
);

const Combo = ({ icon, text, className = "" }: { icon?: ReactNode; text: string; className?: string }) => (
  <div className={`flex items-center rounded-[3px] border border-[#a9a9a9] bg-linear-to-b from-[#fefefe] to-[#ebebeb] ${className}`}>
    {icon}
    <span className="flex-1">{text}</span>
    <Down />
  </div>
);
const Btn = ({ children, className = "" }: { children: ReactNode; className?: string }) => (
  <div className={`flex items-center justify-center rounded-[3px] border border-[#a9a9a9] bg-linear-to-b from-[#fefefe] to-[#efefef] ${className}`}>{children}</div>
);
const MoreBtn = ({ className = "h-[23px]" }: { className?: string }) => (
  <div className={`relative flex w-[27px] items-center justify-center rounded-[3px] border border-[#a9a9a9] bg-linear-to-b from-[#fefefe] to-[#ececec] ${className}`}>
    <svg width="10" height="2" viewBox="0 0 10 2" className="mt-[8px]"><path d="M0 1h2M4 1h2M8 1h2" stroke="#111" strokeWidth="1.600" /></svg>
    <span className="absolute right-[1px] bottom-[3px]"><Down c="#444" /></span>
  </div>
);

/* ---------- left docks ---------- */

const VECTOR_TABLES: [string, ReactNode][] = [
  ["airports", <PointsIcon />], ["majrivers", <LineIcon />], ["popp", <PointsIcon />], ["rail", <LineIcon />], ["regions", <PolyIcon />],
  ["swamps", <PolyIcon />], ["trees_b", <PolyIcon />], ["vegdesc_Deciduous", <PolyIcon />], ["vegdesc_Evergreen", <PolyIcon />], ["vegdesc_Mixed Trees", <PolyIcon />],
];

const TreeIcon = ({ up = true }: { up?: boolean }) => (
  <svg width="16" height="16" viewBox="0 0 16 16">
    <path d="M1.500 1v13M1.500 3.500h4M1.500 11h4M5 2h4" stroke="#666" fill="none" />
    <rect x="5" y="6" width="4" height="3" fill="#f8c471" stroke="#f08a1a" /><rect x="5" y="11" width="4" height="3" fill="#f8c471" stroke="#f08a1a" />
    <path d={up ? "M11.500.500 15.700 5H13v9h-3V5H7.300z" : "M11.500 14 15.700 9.500H13V1h-3v8.500H7.300z"} fill="#6b95c6" stroke="#35588a" strokeWidth=".8" />
  </svg>
);
const Funnel = () => (
  <svg width="15" height="15" viewBox="0 0 15 15"><path d="M.5 2.500h14L9 8v6.500l-3-1.500V8z" fill="#6b95c6" stroke="#4b75a8" strokeWidth=".7" /><rect x="0" y="0" width="15" height="2.600" fill="#f3dc4a" stroke="#c8b02c" strokeWidth=".6" /></svg>
);
const AddLayer = () => (
  <svg width="16" height="16" viewBox="0 0 16 16"><rect x="1" y="1.500" width="11.500" height="11" fill="#f4f4f4" stroke="#888" /><circle cx="12.500" cy="12.500" r="3" fill="#bcd9bd" stroke="#4f8a57" strokeWidth="1.200" /></svg>
);
const Elephant = () => (
  <svg width="21" height="20" viewBox="0 0 21 20" className="shrink-0"><path d="M4 1.500C7 .3 9 1 10.500 1.500c3-1 8-1 9 2 .8 3-.8 7-2.500 9.500l2 .8c-1 1.500-3 1.200-4.500.7-.2 3.500-.5 5-2.700 5.200-2.500 0-2.300-2-2.500-5C7 15.500 6 14 5 13 2.500 11.500.5 6 .8 4 1 2.500 2.500 1.800 4 1.500z" fill="#5a88b8" stroke="#2f527f" /><path d="M7.500 3c-1 4-.5 6 0 9M14 3c1 4 1 6-.5 8v3" stroke="#2f527f" fill="none" /></svg>
);
const Db = () => (
  <svg width="16" height="16" viewBox="0 0 16 16" className="shrink-0" fill="#f0f0f0" stroke="#888"><path d="M1 3v10c0 3 14 3 14 0V3" /><ellipse cx="8" cy="3" rx="7" ry="2.300" /><path d="M1 6.500c0 3 14 3 14 0M1 10c0 3 14 3 14 0" fill="none" /></svg>
);

const BrowserDock = () => (
  <div className="flex shrink-0 flex-col">
    <div className="flex h-[21px] items-center justify-between pr-[2px] pl-[1px]"><span>Przeglądarka</span><DockButtons /></div>
    <div className="flex h-[29px] items-center gap-[9px] pb-[3px] pl-[5px]">
      <AddLayer /><Icon name="refresh" size={15} /><Funnel /><TreeIcon />
      <svg width="14" height="14" viewBox="0 0 14 14" className="ml-[1px]"><circle cx="7" cy="7" r="6.500" fill="#6b95c6" stroke="#4b75a8" /><path d="M7.500 2.800v2M7.500 6 6.500 11" stroke="#fff" strokeWidth="1.700" /></svg>
    </div>
    <div className="flex h-[298px] flex-col border-t border-r border-b border-[#b9b9b9] bg-white">
      <div className="flex h-[279px] overflow-hidden">
        <div className="flex w-[213px] shrink-0 flex-col overflow-hidden whitespace-nowrap">
          <div className="flex h-[22px] shrink-0 items-center gap-[6px] pl-[1px]"><Down /><Elephant /><span>PostgreSQL</span></div>
          <div className="flex h-[22px] shrink-0 items-center pl-[18px]"><Down />
            <svg width="14" height="12" viewBox="0 0 14 12" className="mr-[9px] ml-[10px]"><path d="M0 6h6M13 2H10Q6 2 6 6t4 4h3" stroke="#8e5a14" strokeWidth="2" fill="none" /></svg><span>localhost</span></div>
          <div className="flex h-[22px] shrink-0 items-center pl-[35px]"><Down /><span className="mr-[9px] ml-[9px]"><Db /></span><span>public</span></div>
          {VECTOR_TABLES.map(([name, icon]) => (
            <div key={name} className={`flex h-[22px] shrink-0 items-center pl-[54px] ${name === "popp" ? "bg-[#efefef]" : ""}`}>
              <Right /><span className="ml-[9px] flex w-[26px] shrink-0 items-center">{icon}</span><span>{name}</span>
            </div>
          ))}
        </div>
        <VScroll before="h-[64px] border-b border-[#b9b9b9]" handle="h-[88px]" />
      </div>
      <div className="flex h-[17px] shrink-0 border-t border-[#b9b9b9] bg-[#e4e4e4]">
        <div className="flex w-[14px] items-center border-r border-[#b9b9b9] bg-[#fafafa] pl-[3px]"><Left /></div>
        <div className="w-[163px] border-r border-[#b9b9b9] bg-linear-to-b from-[#fdfdfd] to-[#f0f0f0]" />
        <div className="w-[19px] border-r border-[#b9b9b9]" />
        <div className="flex w-[17px] items-center justify-center border-r border-[#b9b9b9] bg-[#fafafa]"><Right /></div>
        <div className="flex-1 bg-[#efefef]" />
      </div>
    </div>
  </div>
);

const Dot = ({ c }: { c: string }) => <svg width="20" height="12" viewBox="0 0 20 12" className="shrink-0"><circle cx="10" cy="6" r="4.800" fill={c} stroke="#333" /></svg>;
const Swatch = ({ cls }: { cls: string }) => <span className={`size-[19px] shrink-0 border border-[#333] ${cls}`} />;

const Layer = ({ on, icon, name, style, child, arrow }: { on?: boolean; icon: ReactNode; name: string; style: string; child?: boolean; arrow?: boolean }) => (
  <div className={`flex h-[22px] shrink-0 items-center ${child ? "pl-[51px]" : "pl-[26px]"} relative`}>
    {arrow && <span className="absolute top-[7px] left-[5px]"><Down /></span>}
    <Check on={on} />
    <span className="ml-[6px] flex w-[20px] items-center">{icon}</span>
    <span className={`pt-[1px] ${child ? "ml-[5px]" : "ml-[6px]"} ${style}`}>{name}</span>
  </div>
);

const OFF = "font-bold italic text-[#808080] tracking-[0.35px]";

const LayersDock = () => (
  <div className="flex min-h-0 flex-1 flex-col">
    <div className="flex h-[23px] shrink-0 items-center justify-between pr-[2px] pb-[2px] pl-[1px]"><span>Warstwy</span><DockButtons /></div>
    <div className="flex h-[27px] shrink-0 items-center pb-[5px] pl-[5px]">
      <svg width="16" height="16" viewBox="0 0 16 16" className="mr-[9px]"><path d="M10 6 15.500 1" stroke="#d9a05b" strokeWidth="2" /><path d="M1 8l7-3 4 4-4 5c-3 0-6-3-7-6z" fill="#f5c33b" /><path d="M1 8l3.500-1.500L10 12l-2 2c-3 0-6-3-7-6z" fill="#e0533d" /></svg>
      <svg width="16" height="16" viewBox="0 0 16 16" className="mr-[9px]" fill="none" stroke="#666"><path d="M1.500 5v9.500H9M3.500 3v9.500h8M5.500 1h7v9.500h-7z" /><path d="M10 3v5" /><circle cx="12.500" cy="12.500" r="2.500" fill="#bcd9bd" stroke="#4f8a57" /></svg>
      <svg width="18" height="16" viewBox="0 0 18 16" className="mr-[8px]"><path d="M.5 8.500c4-6 11-6 14 0-4 4-10 4-14 0z" fill="#eee" stroke="#777" /><circle cx="7.500" cy="8" r="3" fill="#5a88b8" stroke="#333" strokeWidth=".7" /><path d="M9 10h8l-4 4.500z" fill="#555" /></svg>
      <span className="relative mr-[10px]"><Funnel /><span className="absolute -right-[2px] -bottom-[1px] scale-90"><Down /></span></span>
      <svg width="16" height="16" viewBox="0 0 16 16" className="mr-[6px]"><text x="0" y="10" fontSize="14" fontWeight="bold" fontFamily="Open Sans" fill="#7b4a86">ε</text><path d="M8.500 15v-4c0-3 5-3 5 0v4" stroke="#999" strokeWidth="2" fill="none" /></svg>
      <Down /><span className="ml-[9px]"><TreeIcon up={false} /></span><span className="ml-[9px]"><TreeIcon /></span>
      <svg width="16" height="16" viewBox="0 0 16 16" className="ml-[8px]"><rect x="1" y="1.500" width="11.500" height="11" fill="#f0ece6" stroke="#888" /><rect x="9" y="10.500" width="6" height="4" rx="1" fill="#e65058" /></svg>
    </div>
    <div className="relative flex flex-1 flex-col overflow-hidden border-t border-r border-b border-[#b9b9b9] bg-white">
      <div className="flex shrink-0 items-center bg-[#efefef]">
        <Layer on icon={<Dot c="#d2b33a" />} name="Przycięte" style="font-bold underline tracking-[-0.1px]" />
        <span className="mr-[8px] ml-auto flex h-[18px] w-[18px] items-center justify-center rounded-[2px] border border-[#dcdcdc] bg-[#f7f7f7]">
          <svg width="14" height="12" viewBox="0 0 14 12" fill="none" stroke="#888"><rect x="1.500" y="3" width="11" height="6" rx="1" strokeWidth="1.400" /><path d="M4 0v3M6 0v3M8 0v3M10 0v3M4 9v3M6 9v3M8 9v3M10 9v3" /></svg>
        </span>
      </div>
      <Layer icon={<Dot c="#7fb069" />} name="popp" style={OFF} />
      <Layer icon={<Dot c="#c83a3a" />} name="airports" style={OFF} />
      <Layer icon={<span className="h-[2px] w-[19px] bg-[#b8937a]" />} name="rail" style={OFF} />
      <Layer arrow icon={<PolyIcon />} name="trees_b" style={OFF} />
      <Layer child icon={<Swatch cls="bg-[#e6690f]" />} name="Deciduous" style="" />
      <Layer child icon={<Swatch cls="bg-[#00d900]" />} name="Evergreen" style="" />
      <Layer child icon={<Swatch cls="bg-[#8600d4]" />} name="Mixed Trees" style="" />
      <Layer child icon={<Swatch cls="bg-[#68de9d]" />} name="" style="" />
      <Layer icon={<Swatch cls="bg-[#c9dbff]" />} name="region_ms" style={OFF} />
      <Layer on icon={<Swatch cls="bg-[#a47158]" />} name="region_bb" style="font-bold tracking-[0px]" />
      <Layer icon={<Swatch cls="bg-[#e15989]" />} name="regions" style={OFF} />
    </div>
  </div>
);

/* ---------- map canvas ---------- */

const REGION =
  "543,400.3 540,402.3 529.7,414.7 529.7,427.7 533,430.7 533,449.3 539.3,462.7 536.7,480.3 529.3,489.3 524.7,505.7 515,524.7 510.3,531.3 502.3,532.3 493.7,542 490.3,548.7 491.7,570.7 486.3,593.3 488,601.7 493,610 505.7,614.7 524,608.7 540.7,608.3 546.7,615.7 543.7,615.7 539,619 525.3,619.7 516.3,626 506.3,628.7 489.7,627 469,633.3 456.7,648 446,654 433.3,667.7 425.7,670.7 414,679.3 407,687.7 399.3,700.7 385.7,713.7 368.7,723 358,737.3 350,742.7 372,743.3 520,750.5 670,757.7 830,764.5 990.3,769.7 996,590 1002.7,418.3 840,412 670,405.5 620,403.5 580,401.5";
const PLACES: [number, number][] = [[535.7, 420.7], [499, 552], [498, 565], [547, 589], [618, 622], [526, 624], [493, 632], [473, 642], [764.7, 668], [894, 687], [823, 724]];

const MapCanvas = () => (
  <div className="flex min-w-0 flex-1 flex-col border border-[#b0b0b0] bg-white">
    <div className="flex h-[35px] shrink-0 items-center border-b border-[#9db096] bg-[#dff0d8] pl-[9px]">
      <svg width="24" height="20" viewBox="0 0 24 20"><path d="M1 9.500 4 7.500 8.500 12.500C12 7.500 16 3.500 23 .5 17 6 13 11 9.500 18z" fill="#2fc12f" stroke="#1a7d1a" /></svg>
      <div className={`ml-[12px] flex items-center gap-[3px] whitespace-nowrap ${TAH}`}>
        <b className="tracking-[-0.3px]">Warstwa wyeksportowana:</b><span className="mr-[2px] tracking-[0.2px]">Zapisano warstwę wektorową do</span><span className="text-[#16881a] underline tracking-[-0.1px]">region_bb.shp</span>
      </div>
    </div>
    <svg viewBox="239 240 1323 750" width="1323" height="750" className="shrink-0">
      <polygon points={REGION} fill="#a47158" stroke="#262626" strokeWidth="1.200" strokeLinejoin="round" />
      {PLACES.map(([x, y]) => <circle key={x} cx={x} cy={y} r="4.700" fill="#d4b43a" stroke="#3a3020" />)}
    </svg>
  </div>
);

/* ---------- right docks ---------- */

const AlgRow = ({ name }: { name: string }) => (
  <div className="flex h-[22px] shrink-0 items-center pl-[10px]"><Right /><span className="mr-[7px] ml-[13px] flex"><QLogo size={18} /></span>{name}</div>
);
const Sum = () => <svg width="14" height="16" viewBox="0 0 14 16"><path d="M.5.500h12.500v4h-1.200C11.500 3 10.800 2.500 9.500 2.500h-5L9 8l-5 5.500h6c1.300 0 2-.7 2.500-2h1l-.8 4.200H.5v-1.700L5.500 8 .5 2z" fill="#8199ab" /></svg>;

const RightDock = () => (
  <div className="flex w-[323px] shrink-0 flex-col overflow-hidden whitespace-nowrap">
    <div className="flex h-[50px] shrink-0 pt-[4px] pl-[319px]"><DockButtons /></div>
    <div className="h-[26px] shrink-0 border-t border-b-2 border-[#b0b0b0] bg-white" />
    <div className="flex h-[271px] shrink-0 flex-col overflow-hidden border-b border-l border-[#b9b9b9] bg-white pt-[200px]">
      <AlgRow name="Raster - narzędzia" />
      <AlgRow name="Siatka" />
      <AlgRow name="Tworzenie rastra" />
      <AlgRow name="Wektor - analiza" />
    </div>
    <div className="flex h-[8px] shrink-0 items-center pl-[167px]"><HDots /></div>
    <div className="flex h-[20px] shrink-0 items-center pl-[3px]"><span className="w-[317px] shrink-0">Podgląd wyników</span><DockButtons /></div>
    <div className="flex h-[205px] shrink-0 flex-col border-t border-b border-l border-[#b9b9b9] bg-white">
      <div className="flex h-[22px] items-center gap-[9px] bg-[#efefef] pl-[6px]"><Sum />Statystyki [09:30:22PM]</div>
      <div className="flex h-[22px] items-center gap-[9px] pl-[6px]"><Sum />Statystyki [11:50:42AM]</div>
    </div>
    <div className="flex h-[5px] shrink-0 items-center pl-[167px]"><HDots /></div>
    <div className={`flex-1 border border-r-0 border-[#b9b9b9] bg-white pt-[4px] pl-[4px] leading-[16px] ${TAH}`}>
      <div><b className="tracking-[-0.4px]">Algorithm:</b> Statystyki</div>
      <div><b className="tracking-[-0.4px]">File path:</b> <span className="text-[#0000ff] underline">C:</span></div>
      <div className="text-[#0000ff] underline">\Users\Dell7520\AppData\Local\Temp\processing_MpiGVk</div>
      <div className="text-[#0000ff] underline">\21b412e9f6674bca8a0a15b64ba090ab\OUTPUT_HTML_FI</div>
      <div className="text-[#0000ff] underline">LE.html</div>
    </div>
  </div>
);

/* ---------- clip dialog ---------- */

const InputRow = ({ icon, text }: { icon: ReactNode; text: string }) => (
  <div className="flex h-[28px] shrink-0 items-start">
    <Combo className="h-[28px] w-[439px] pr-[9px] pl-[5px]" icon={<span className="mr-[3px] flex w-[20px]">{icon}</span>} text={text} />
    <span className="mt-[2px] ml-[10px]"><Icon name="loop" size={23} /></span>
    <span className="mt-[1px] ml-[14px]"><Icon name="wrench" size={25} /></span>
    <span className="ml-[10px]"><MoreBtn /></span>
  </div>
);

const HELP1 = ["Algorytm przycina", "warstwę wektorową,", "korzystając z obiektów", "dodatkowej warstwy", "poligonowej. Tylko", "części obiektów", "warstwy wejściowej,", "które znajdują się", "wewnątrz poligonów", "warstwy nakładki,", "zostaną dodane do", "warstwy wynikowej."];
const HELP2 = ["Atrybuty obiektów nie", "są modyfikowane,", "chociaż właściwości", "takie jak powierzchnia", "lub długość obiektów"];

const ClipDialog = () => (
  <div className={`absolute top-[14px] left-[1113px] flex h-[480px] w-[763px] flex-col border border-[#9a9a9a] bg-[#efefef] shadow-[0_2px_18px_rgba(0,0,0,0.4)] ${TAH}`}>
    <div className={`flex h-[37px] shrink-0 items-center bg-white pr-[14px] pl-[9px] text-[#999] ${SEG}`}>
      <QLogo /><span className="ml-[5px] flex-1">Przytnij</span>
      <svg width="13" height="13" viewBox="0 0 13 13"><path d="M.5.500l12 12M12.500.500l-12 12" stroke="#888" /></svg>
    </div>
    <div className="flex h-[342px] shrink-0 pt-[13px] pl-[13px]">
      <div className="flex w-[560px] shrink-0 flex-col">
        <div className="flex h-[29px] shrink-0 items-end">
          <div className="z-10 -mb-px flex h-[30px] w-[90px] items-center justify-center rounded-t-[3px] border border-b-0 border-[#a9a9a9] bg-[#f9f9f9] pt-[1px]">Parametry</div>
          <div className="flex h-[27px] w-[98px] items-center justify-center rounded-t-[3px] border border-b-0 border-l-0 border-[#b5b5b5] bg-[#e6e6e6] pt-[2px]">Plik zdarzeń</div>
        </div>
        <div className="flex h-[299px] flex-col border border-[#a9a9a9] pl-[5px]">
          <div className="flex h-[28px] shrink-0 items-center pb-[2px] tracking-[0.1px]">Warstwa wejściowa</div>
          <InputRow icon={<PointsIcon />} text="popp [EPSG:2964]" />
          <div className="flex h-[33px] shrink-0 items-center gap-[6px] text-[#808080]"><Check dim />Tylko zaznaczone obiekty</div>
          <div className="flex h-[25px] shrink-0 items-center pb-[4px] tracking-[0.05px]">Warstwa nakładki</div>
          <InputRow icon={<PolyIcon />} text="region_bb [EPSG:2964]" />
          <div className="flex h-[33px] shrink-0 items-center gap-[6px] text-[#808080]"><Check dim />Tylko zaznaczone obiekty</div>
          <div className="flex h-[25px] shrink-0 items-center pb-[4px]">Przycięte</div>
          <div className="flex h-[24px] shrink-0 items-center">
            <div className="flex h-[24px] w-[514px] items-center rounded-[2px] border border-[#a9a9a9] bg-white pl-[2px] tracking-[0px] text-[#808080]">[Twórz warstwę tymczasową]</div>
            <span className="ml-[7px]"><MoreBtn className="h-[24px]" /></span>
          </div>
          <div className="flex h-[36px] shrink-0 items-center gap-[6px]"><Check on />Wczytaj plik wynikowy po zakończeniu</div>
        </div>
      </div>
      <div className="flex w-[16px] shrink-0 flex-col items-center"><span className="-ml-[4px] pt-[1px]"><Right /></span><span className="pt-[145px]"><VDots /></span></div>
      <div className="flex h-[328px] w-[159px] shrink-0 border border-[#b9b9b9] bg-white text-[#666]">
        <div className="w-[141px] shrink-0 overflow-hidden pl-[4px] leading-[16px] whitespace-nowrap">
          <div className="pt-[5px] text-[21px] leading-[25px] font-bold tracking-[-0.5px] text-[#555]">Przytnij</div>
          <div className="pt-[11px] tracking-[0.02px]">{HELP1.map((l) => <div key={l}>{l}</div>)}</div>
          <div className="pt-[12px]">{HELP2.map((l) => <div key={l}>{l}</div>)}</div>
        </div>
        <VScroll before="h-0" handle="h-[202px]" />
      </div>
    </div>
    <div className="flex shrink-0 items-center justify-end gap-[7px] pt-[29px] pr-[13px]">
      <div className="h-[24px] w-[640px] rounded-[2px] border border-[#a9a9a9] bg-white" />
      <Btn className="h-[25px] w-[80px] border-[#c0c0c0] text-[#8a8a8a]">Anuluj</Btn>
    </div>
    <div className="flex shrink-0 justify-end gap-[7px] pt-[7px] pr-[13px]">
      <Btn className="h-[25px] w-[80px]">Uruchom</Btn>
      <Btn className="h-[25px] w-[80px]">Zamknij</Btn>
      <Btn className="h-[25px] w-[80px]">Pomoc</Btn>
    </div>
  </div>
);

/* ---------- group stats ---------- */

const Pie = () => (
  <svg width="26" height="26" viewBox="0 0 26 26" className="shrink-0">
    <path d="M13 13V0a13 13 0 0 0-12.200 17.500z" fill="url(#gBlue)" /><path d="M13 13 .8 17.500A13 13 0 0 0 13 26z" fill="url(#gGreen)" /><path d="M13 0a13 13 0 0 1 0 26z" fill="url(#gOrange)" />
    <path d="M13 0v26M13 13 .8 17.500" stroke="#7a7a40" strokeWidth=".7" />
  </svg>
);
const Doc = () => (
  <svg width="26" height="28" viewBox="0 0 26 28" className="shrink-0">
    <path d="M3 .5h20q2 0 2 2v19.500l-5 5.500H3q-2 0-2-2V2.500q0-2 2-2z" fill="url(#gGrey)" stroke="#aaa" /><path d="M20 27.500V23.500q0-1.500 1.500-1.500H25" fill="#fafafa" stroke="#aaa" />
    <path d="M5 5.500h16M5 9.500h16M5 14.500h16M5 19.500h9" stroke="#8a8a8a" strokeWidth="1.200" />
  </svg>
);
const Bars = () => (
  <svg width="26" height="28" viewBox="0 0 26 28" className="shrink-0">
    <rect x="0" y="25" width="26" height="2.500" rx="1" fill="#ccc" />
    <rect x="1" y="15" width="8" height="10" rx="2" fill="url(#gRed)" /><rect x="9" y="7" width="8" height="18" rx="2" fill="url(#gBlue)" /><rect x="17" y="0" width="8" height="25" rx="2.500" fill="url(#gGreen)" />
  </svg>
);
const Field = ({ icon, name, sel }: { icon: ReactNode; name: string; sel?: boolean }) => (
  <div className={`flex h-[32px] shrink-0 items-center pl-[5px] ${SEG} ${sel ? "bg-[#efefef]" : ""}`}>{icon}<span className="ml-[8px] pt-[2px] tracking-[0.1px]">{name}</span></div>
);

const GroupStats = () => (
  <div className={`absolute top-[357px] left-[1042px] flex h-[660px] w-[474px] flex-col border border-[#5c5c5c] bg-[#efefef] shadow-[0_3px_20px_rgba(0,0,0,0.5)] ${TAH}`}>
    <div className={`flex h-[37px] shrink-0 items-center bg-white pr-[23.5px] pl-[9px] ${SEG}`}>
      <QLogo /><span className="ml-[5px] flex-1">Group Stats</span>
      <svg width="130" height="13" viewBox="0 0 130 13" fill="none" stroke="#000"><path d="M.5 6h12M59 .500h11.500v11.500h-11.500zM117.500.500l12 12M129.500.500l-12 12" /></svg>
    </div>
    <div className={`flex h-[25px] shrink-0 items-center gap-[16px] border-b border-[#d4d4d4] pt-[1px] pl-[11px] ${SEG}`}>
      <span><u>D</u>ata</span><span>Feat<u>u</u>res</span><span>W<u>i</u>ndow</span><span>He<u>l</u>p</span>
    </div>
    <div className="flex min-h-0 flex-1">
      <div className={`relative mt-[11px] ml-[11px] w-[141px] shrink-0 border border-[#b9b9b9] bg-white ${SEG}`}>
        <div className="flex h-[24px] border-b border-[#efefef] bg-[#efefef]">
          <div className="flex w-[56px] items-center justify-center border-r border-b border-[#b9b9b9] bg-linear-to-b from-[#fafafa] to-[#e8e8e8] pt-[3px]">1<span className="-mt-[4px] ml-[14px] -mr-[22px]"><Down /></span></div>
          <div className="flex w-[43px] items-center justify-center border-b border-[#b9b9b9] bg-linear-to-b from-[#fafafa] to-[#e8e8e8] pt-[3px]">2</div>
        </div>
        <div className="flex h-[37px] text-right">
          <div className="flex w-[13px] items-center justify-center overflow-hidden border-r border-b border-[#b9b9b9] bg-[#f3f3f3] pb-[4px]">1</div>
          <div className="w-[43px] border-r border-b border-[#c4c4c4] bg-[#f5eaea]" /><div className="w-[43px] border-r border-b border-[#c4c4c4] bg-[#f5eaea]" />
        </div>
        <div className="flex h-[37px]">
          <div className="flex w-[13px] items-center justify-center overflow-hidden border-r border-b border-[#b9b9b9] bg-[#f3f3f3] pt-[2px]">2</div>
          <div className="w-[43px] border-r border-b border-[#c4c4c4] bg-[#f5eaea]" /><div className="flex w-[43px] items-center justify-end border-r border-b border-[#c4c4c4] pt-[2px] pr-[4px]">11</div>
        </div>
        <div className="h-[500px] w-[13px] bg-[#efefef]" />
        <svg width="148" height="124" viewBox="0 0 148 124" className="absolute top-0 -left-[3px]"><ellipse cx="74" cy="61" rx="69.500" ry="57" fill="none" stroke="#ee1c24" strokeWidth="5" /></svg>
      </div>
      <div className="flex w-[29px] shrink-0 items-start justify-center pt-[323px]"><VDots /></div>
      <div className="flex w-[281px] shrink-0 flex-col">
        <div className={`-ml-[7px] flex h-[24px] shrink-0 items-center justify-between pb-[2px] ${SEG}`}><span>Control panel</span><span className="-mt-[2px] -mr-[8px]"><DockButtons /></span></div>
        <div className="flex h-[29px] shrink-0 items-center pt-[1px]">Layers</div>
        <Combo className="h-[24px] w-[280px] shrink-0 pr-[9px] pl-[4px]" text="Przycięte" />
        <div className="flex h-[30px] shrink-0 items-center pt-[1px]">Fields</div>
        <div className="flex h-[236px] w-[280px] shrink-0 border border-[#b0b0b0] bg-white">
          <div className="flex w-[261px] flex-col overflow-hidden">
            <Field icon={<Pie />} name="cat" /><Field icon={<Doc />} name="f_code" /><Field icon={<Doc />} name="f_codedesc" /><Field sel icon={<Pie />} name="gid" />
            <Field icon={<Doc />} name="type" /><Field icon={<Bars />} name="average" /><Field icon={<Bars />} name="count" /><Field icon={<Bars />} name="max" />
          </div>
          <VScroll before="h-0" handle="h-[100px]" />
        </div>
        <div className="flex h-[36px] shrink-0 items-center pt-[1px]"><Btn className="h-[23px] w-[45px]">Filter</Btn><span className="ml-[75px]">Columns</span></div>
        <div className="flex h-[85px] shrink-0 gap-[7px]"><div className="w-[113px] border border-[#b0b0b0] bg-white" /><div className="w-[160px] border border-[#b0b0b0] bg-white" /></div>
        <div className="flex h-[36px] shrink-0 items-center"><span className="w-[120px]">Rows</span><span className="w-[39px]">Value</span><Check /><span className="ml-[6px] whitespace-nowrap">use NULL values</span></div>
        <div className="flex h-[120px] shrink-0 gap-[7px]">
          <div className="w-[113px] border border-[#b0b0b0] bg-white" />
          <div className="w-[160px] border border-[#b0b0b0] bg-white"><Field icon={<Pie />} name="gid" /><Field icon={<Bars />} name="count" /></div>
        </div>
      </div>
    </div>
  </div>
);

/* ---------- page ---------- */

export default function App() {
  return (
    <div className={`relative flex h-[1001px] w-[1893px] flex-col overflow-hidden bg-[#efefef] leading-none text-black ${SEG}`}>
      <svg width="0" height="0" className="absolute">
        <defs>
          <linearGradient id="gBlue" x2="0" y2="1"><stop stopColor="#2fb8e8" /><stop offset="1" stopColor="#156287" /></linearGradient>
          <linearGradient id="gGreen" x2="0" y2="1"><stop stopColor="#92c455" /><stop offset="1" stopColor="#447812" /></linearGradient>
          <linearGradient id="gOrange" x2="0" y2="1"><stop stopColor="#fcc83f" /><stop offset="1" stopColor="#f57c05" /></linearGradient>
          <linearGradient id="gRed" x2="0" y2="1"><stop stopColor="#f28a3a" /><stop offset="1" stopColor="#c9370b" /></linearGradient>
          <linearGradient id="gGrey" x2="0" y2="1"><stop stopColor="#efefef" /><stop offset="1" stopColor="#d3d3d3" /></linearGradient>
        </defs>
      </svg>
      <div className="flex h-[23px] shrink-0 items-start bg-white">
        <span className="-mt-[2px] -ml-[1px]"><QLogo size={19} /></span>
        <span className="mt-[2px] ml-[6px] flex-1 tracking-[0.1px] text-[#888]">*bdp — QGIS</span>
        <svg width="131" height="14" viewBox="0 0 131 14" className="mt-[1px]" fill="none" stroke="#999"><path d="M.5 6.500h12M59 3.500h9v9h-9zM61 3.500v-2h9v9h-2M117 1l12 12M129 1l-12 12" /></svg>
      </div>
      <div className="flex h-[25px] shrink-0 items-center border-b border-[#d4d4d4] pt-[1px] pl-[8px] text-[#999]">
        {MENU.map(([a, b, c, w]) => <span key={a + b + c} className={`shrink-0 whitespace-pre ${w}`}>{a}<u>{b}</u>{c}</span>)}
      </div>
      <ToolRow items={ROW1} />
      <ToolRow items={ROW2} />
      <ToolRow items={["*magnet", "snapv+", "*snappts+"]}>
        <div className={`ml-[1px] flex h-[23px] w-[92px] items-center rounded-[2px] border border-[#a9a9a9] bg-white ${TAH}`}>
          <span className="flex-1 pl-[4px]">12</span>
          <svg width="17" height="14" viewBox="0 0 17 14" className="mr-[12px]"><path d="M0 7 4.500 0H17v14H4.500z" fill="#9a9a9a" /><path d="M7 4l6 6M13 4l-6 6" stroke="#fff" strokeWidth="1.800" /></svg>
          <span className="flex h-full w-[17px] flex-col items-center justify-around border-l border-[#c4c4c4]"><Up /><Down /></span>
        </div>
        <Combo className={`ml-[2px] h-[23px] w-[100px] pr-[9px] pl-[4px] ${TAH}`} text="px" />
        {["topo", "overlap+", "cross", "trace", "v", "tracedit"].map((id) => <Item key={id} id={id} />)}
      </ToolRow>
      <ToolRow items={ROW4} />
      <div className="flex min-h-0 flex-1">
        <div className="flex h-[788px] w-[231px] shrink-0 flex-col">
          <BrowserDock />
          <div className="flex h-[7px] shrink-0 items-center justify-center"><HDots /></div>
          <LayersDock />
        </div>
        <div className="flex w-[7px] shrink-0 flex-col items-center pt-[387px]"><VDots /></div>
        <div className="flex h-[788px] min-w-0 flex-1"><MapCanvas /></div>
        <div className="flex w-[7px] shrink-0 flex-col items-center pt-[387px]"><VDots /></div>
        <div className="flex h-[788px]"><RightDock /></div>
      </div>
      <div className="flex h-[6px] shrink-0 items-start">
        <div className="ml-[1px] h-[20px] w-[231px] rounded-[3px] border border-[#a9a9a9] bg-white" />
        <div className="ml-[792px] h-[20px] w-[493px] rounded-[3px] border border-[#a9a9a9]" />
        <div className="ml-[78px] h-[20px] w-[89px] rounded-[3px] border border-[#a9a9a9] bg-white" />
        <div className="mt-[3px] ml-[6px] size-[17px] border border-[#b9b9b9] bg-white" />
        <div className="mt-[3px] ml-[78px] h-[6px] w-[8px] rounded-t bg-[#666]" />
      </div>
      <ClipDialog />
      <GroupStats />
    </div>
  );
}
